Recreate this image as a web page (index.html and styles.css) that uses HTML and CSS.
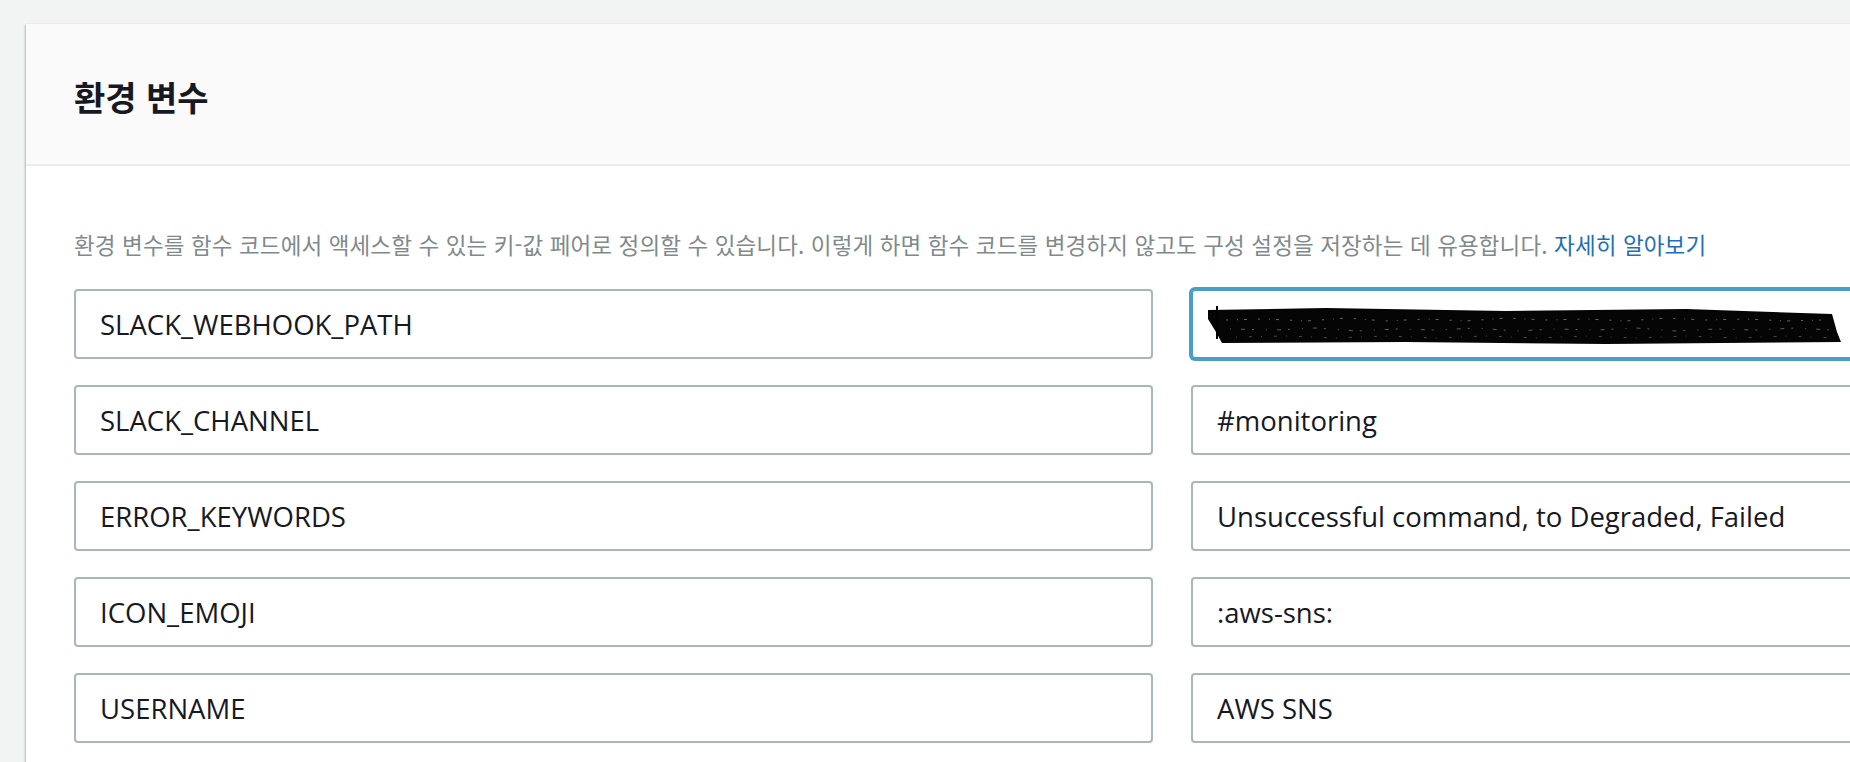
FILE: index.html
```html
<!DOCTYPE html>
<html lang="ko">
<head>
<meta charset="utf-8">
<title>환경 변수</title>
<link rel="stylesheet" href="styles.css">
</head>
<body>
<div class="page">
  <section class="card">
    <header class="card-header">
      <h2 class="title">환경 변수</h2>
    </header>
    <div class="card-body">
      <p class="desc">환경 변수를 함수 코드에서 액세스할 수 있는 키-값 페어로 정의할 수 있습니다. 이렇게 하면 함수 코드를 변경하지 않고도 구성 설정을 저장하는 데 유용합니다. <a class="link" href="#">자세히 알아보기</a></p>
      <div class="env-grid">
        <div class="field">SLACK_WEBHOOK_PATH</div>
        <div class="field focused">
          <svg class="redact" width="640" height="40" viewBox="0 0 640 40">
            <polygon points="2,6 120,4 300,7 480,5 626,10 631,28 635,38 400,40 200,38 16,39 10,28 2,15" fill="#050505"/>
            <polyline points="20,16 60,15 100,17 140,14 180,17 220,15 260,17 300,14 340,16 380,15 420,17 460,14 500,16 540,15 580,17 615,16" fill="none" stroke="#ffffff" stroke-width="0.7" stroke-dasharray="2 9 1 6 3 11" opacity="0.55"/>
            <polyline points="24,25 70,26 110,24 150,27 190,25 230,26 270,24 310,27 350,25 390,26 430,24 470,27 510,25 550,26 590,24 625,26" fill="none" stroke="#ffffff" stroke-width="0.7" stroke-dasharray="1 10 4 7 2 12" opacity="0.5"/>
            <polyline points="30,33 80,32 130,34 180,32 230,34 280,32 330,34 380,32 430,34 480,32 530,34 580,32 628,34" fill="none" stroke="#ffffff" stroke-width="0.6" stroke-dasharray="1 12 3 9" opacity="0.45"/>
            <rect x="10" y="2" width="2" height="33" fill="#000"/>
          </svg>
        </div>
        <div class="field">SLACK_CHANNEL</div>
        <div class="field">#monitoring</div>
        <div class="field">ERROR_KEYWORDS</div>
        <div class="field">Unsuccessful command, to Degraded, Failed</div>
        <div class="field">ICON_EMOJI</div>
        <div class="field">:aws-sns:</div>
        <div class="field">USERNAME</div>
        <div class="field">AWS SNS</div>
      </div>
    </div>
  </section>
</div>
</body>
</html>
```

FILE: styles.css
```css
html, body {
  margin: 0;
  padding: 0;
  overflow: hidden;
  background: #f2f3f3;
  font-family: "Open Sans", "Noto Sans CJK KR", sans-serif;
}

.page {
  padding: 24px 0 0 26px;
}

.card {
  width: 2330px;
  height: 900px;
  background: #ffffff;
  box-shadow: 0 1px 2px rgba(0, 28, 36, 0.25), -1px 1px 2px rgba(0, 28, 36, 0.18);
}

.card-header {
  box-sizing: border-box;
  height: 142px;
  padding: 5px 48px 0;
  display: flex;
  align-items: center;
  background: #fafafa;
  border-bottom: 2px solid #eaeded;
}

.title {
  margin: 0;
  font-family: "Noto Sans CJK KR", sans-serif;
  font-weight: 700;
  font-size: 34px;
  line-height: 42px;
  color: #16191f;
}

.card-body {
  padding: 63px 0 0 48px;
}

.desc {
  margin: 0;
  font-family: "Noto Sans CJK KR", sans-serif;
  font-size: 22.5px;
  letter-spacing: 0.12px;
  line-height: 30px;
  color: #7f8a8b;
  white-space: nowrap;
}

.link {
  color: #1f6fb5;
  text-decoration: none;
}

.env-grid {
  margin-top: 30px;
  display: grid;
  grid-template-columns: 1079px 1079px;
  column-gap: 38px;
  row-gap: 26px;
}

.field {
  box-sizing: border-box;
  height: 70px;
  padding: 0 24px;
  display: flex;
  align-items: center;
  border: 2px solid #aab7b8;
  border-radius: 4px;
  background: #ffffff;
  font-family: "Open Sans", sans-serif;
  font-size: 27.5px;
  color: #16191f;
  white-space: nowrap;
}

.field.focused {
  padding-left: 13px;
  border-color: #4a9ec8;
  box-shadow: 0 0 0 2px #4a9ec8;
}

.redact {
  display: block;
  flex: none;
}
```
